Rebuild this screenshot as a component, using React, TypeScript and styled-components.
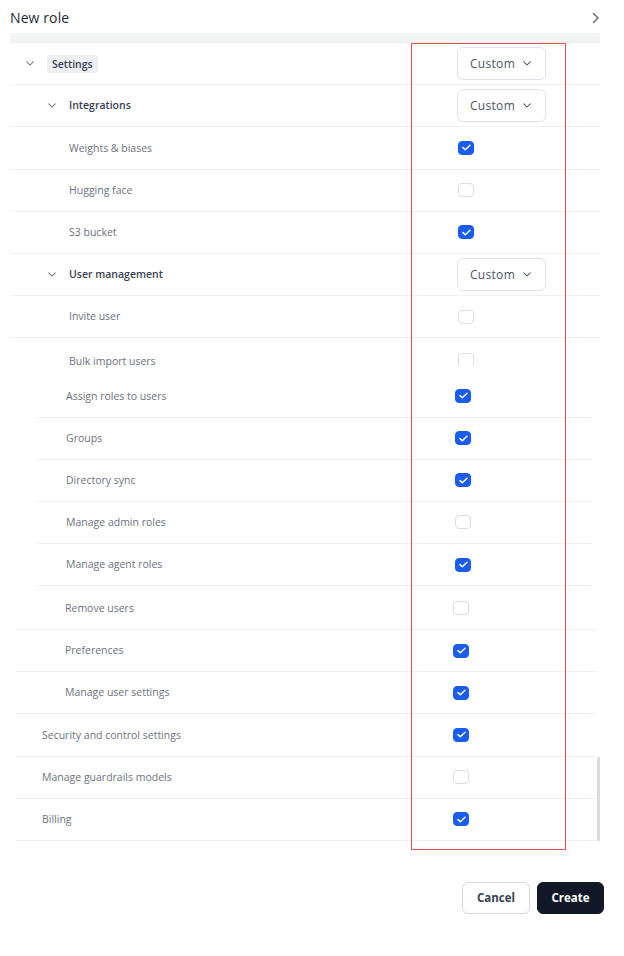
import React from "react";
import styled, { createGlobalStyle } from "styled-components";

const Global = createGlobalStyle`
  html, body { margin: 0; padding: 0; background: #ffffff; }
  body { font-family: "Open Sans", "Noto Sans", Arial, sans-serif; }
  * { box-sizing: border-box; }
`;

const Page = styled.div`
  position: relative;
  width: 624px;
  height: 956px;
  display: flex;
  flex-direction: column;
  overflow: hidden;
`;

const Header = styled.div`
  height: 33px;
  display: flex;
  align-items: center;
  justify-content: space-between;
  padding: 2px 24px 0 10px;
`;

const Title = styled.div`
  font-size: 14px;
  font-weight: 500;
  color: #1f2937;
  letter-spacing: 0.1px;
`;

const IconBtn = styled.span`
  display: flex;
  color: #6b7280;
`;

const Table = styled.div`
  margin-left: 10px;
  width: 590px;
  display: flex;
  flex-direction: column;
`;

const Band = styled.div`
  height: 10px;
  background: #f3f4f6;
  border-bottom: 1px solid #eceef2;
`;

const Block = styled.div<{ $left: number; $width: number }>`
  margin-left: ${(p) => p.$left}px;
  width: ${(p) => p.$width}px;
  display: flex;
  flex-direction: column;
`;

const BottomWrap = styled.div`
  display: flex;
  align-items: flex-end;
  margin-left: 6px;
  margin-top: 1.5px;
`;

const ScrollThumb = styled.div`
  width: 3px;
  height: 84px;
  background: #d9dbe0;
  border-radius: 1px;
`;

const Row = styled.div<{ $col: number; $pad: number; $open?: boolean }>`
  display: grid;
  grid-template-columns: ${(p) => p.$col}px auto;
  align-items: ${(p) => (p.$open ? "start" : "center")};
  height: ${(p) => (p.$open ? 37 : 42.2)}px;
  padding-top: ${(p) => (p.$open ? 15 : 0)}px;
  border-bottom: ${(p) => (p.$open ? "none" : "1px solid #eef0f3")};
  & > :first-child {
    padding-left: ${(p) => p.$pad}px;
  }
`;

const LabelCell = styled.div<{ $shift?: number }>`
  display: flex;
  align-items: center;
  min-width: 0;
  margin-top: ${(p) => p.$shift ?? 0}px;
`;

const Caret = styled.span<{ $w: number }>`
  display: flex;
  width: ${(p) => p.$w}px;
  color: #6b7280;
`;

const Label = styled.span<{ $bold?: boolean }>`
  font-size: 10.5px;
  font-weight: ${(p) => (p.$bold ? 600 : 400)};
  color: ${(p) => (p.$bold ? "#374151" : "#6b7280")};
  white-space: nowrap;
  line-height: 1.2;
`;

const Chip = styled.span`
  display: inline-flex;
  align-items: center;
  height: 18px;
  padding: 0 5px;
  border-radius: 3px;
  background: #eef0f4;
  font-size: 10.5px;
  font-weight: 600;
  color: #374151;
`;

const Select = styled.div`
  width: 89px;
  height: 33px;
  border: 1px solid #dfe2e8;
  border-radius: 6px;
  display: flex;
  align-items: center;
  justify-content: space-between;
  padding: 0 14px 0 12px;
  font-size: 12px;
  color: #4b5563;
  letter-spacing: 0.3px;
  background: #fff;
`;

const CutBox = styled.span`
  display: flex;
  height: 12px;
  overflow: hidden;
`;

const Box = styled.span<{ $on: boolean }>`
  flex: none;
  width: 16px;
  height: 14px;
  border-radius: 4px;
  display: flex;
  align-items: center;
  justify-content: center;
  background: ${(p) => (p.$on ? "#1a5cf2" : "#fff")};
  border: 1px solid ${(p) => (p.$on ? "#1a5cf2" : "#d9dde4")};
`;

const Footer = styled.div`
  margin-top: 41px;
  display: flex;
  justify-content: flex-end;
  gap: 7px;
  padding-right: 20px;
`;

const Button = styled.button<{ $primary?: boolean }>`
  height: 32px;
  padding: 0;
  width: ${(p) => (p.$primary ? 67 : 68)}px;
  border-radius: 6px;
  font-family: inherit;
  font-size: 11.5px;
  font-weight: 700;
  cursor: pointer;
  background: ${(p) => (p.$primary ? "#111827" : "#ffffff")};
  color: ${(p) => (p.$primary ? "#ffffff" : "#374151")};
  border: 1px solid ${(p) => (p.$primary ? "#111827" : "#d7dae0")};
`;

const Highlight = styled.div`
  position: absolute;
  left: 411px;
  top: 43px;
  width: 155px;
  height: 807px;
  box-shadow: inset 0 0 0 1px #ec4a52;
  pointer-events: none;
  z-index: 5;
`;

const ChevronDown = ({ size = 8 }: { size?: number }) => (
  <svg width={size} height={size * 0.6} viewBox="0 0 10 6" fill="none">
    <path d="M1 1l4 4 4-4" stroke="currentColor" strokeWidth="1.3" strokeLinecap="round" strokeLinejoin="round" />
  </svg>
);

const ChevronRight = () => (
  <svg width="8" height="12" viewBox="0 0 8 12" fill="none">
    <path d="M1.5 1.5L6 6l-4.5 4.5" stroke="currentColor" strokeWidth="1.6" strokeLinecap="round" strokeLinejoin="round" />
  </svg>
);

const Check = ({ on }: { on: boolean }) => (
  <Box $on={on}>
    {on && (
      <svg width="9" height="7" viewBox="0 0 9 7" fill="none">
        <path d="M1 3.6l2.3 2.2L8 1.2" stroke="#fff" strokeWidth="1.5" strokeLinecap="round" strokeLinejoin="round" />
      </svg>
    )}
  </Box>
);

type Item = { label: string; on: boolean; pad: number };

const middle: Item[] = [
  { label: "Assign roles to users", on: true, pad: 29 },
  { label: "Groups", on: true, pad: 29 },
  { label: "Directory sync", on: true, pad: 29 },
  { label: "Manage admin roles", on: false, pad: 29 },
  { label: "Manage agent roles", on: true, pad: 29 },
];

const bottom: Item[] = [
  { label: "Remove users", on: false, pad: 49 },
  { label: "Preferences", on: true, pad: 49 },
  { label: "Manage user settings", on: true, pad: 49 },
  { label: "Security and control settings", on: true, pad: 26 },
  { label: "Manage guardrails models", on: false, pad: 26 },
  { label: "Billing", on: true, pad: 26 },
];

const integrations: Item[] = [
  { label: "Weights & biases", on: true, pad: 59 },
  { label: "Hugging face", on: false, pad: 59 },
  { label: "S3 bucket", on: true, pad: 59 },
];

export default function App() {
  return (
    <Page>
      <Global />
      <Header>
        <Title>New role</Title>
        <IconBtn>
          <ChevronRight />
        </IconBtn>
      </Header>
      <Table>
        <Band />
        <Row $col={447} $pad={16}>
          <LabelCell>
            <Caret $w={21}>
              <ChevronDown />
            </Caret>
            <Chip>Settings</Chip>
          </LabelCell>
          <Select>
            <span>Custom</span>
            <ChevronDown />
          </Select>
        </Row>
        <Row $col={447} $pad={38}>
          <LabelCell>
            <Caret $w={21}>
              <ChevronDown />
            </Caret>
            <Label $bold>Integrations</Label>
          </LabelCell>
          <Select>
            <span>Custom</span>
            <ChevronDown />
          </Select>
        </Row>
        {integrations.map((it) => (
          <Row key={it.label} $col={448} $pad={it.pad}>
            <LabelCell>
              <Label>{it.label}</Label>
            </LabelCell>
            <Check on={it.on} />
          </Row>
        ))}
        <Row $col={447} $pad={38}>
          <LabelCell>
            <Caret $w={21}>
              <ChevronDown />
            </Caret>
            <Label $bold>User management</Label>
          </LabelCell>
          <Select>
            <span>Custom</span>
            <ChevronDown />
          </Select>
        </Row>
        <Row $col={448} $pad={59}>
          <LabelCell>
            <Label>Invite user</Label>
          </LabelCell>
          <Check on={false} />
        </Row>
        <Row $col={448} $pad={59} $open>
          <LabelCell $shift={2}>
            <Label>Bulk import users</Label>
          </LabelCell>
          <CutBox>
            <Check on={false} />
          </CutBox>
        </Row>
        <Block $left={27} $width={555}>
          {middle.map((it) => (
            <Row key={it.label} $col={418} $pad={it.pad}>
              <LabelCell>
                <Label>{it.label}</Label>
              </LabelCell>
              <Check on={it.on} />
            </Row>
          ))}
        </Block>
        <BottomWrap>
          <Block $left={0} $width={581}>
            {bottom.map((it) => (
              <Row key={it.label} $col={437} $pad={it.pad}>
                <LabelCell>
                  <Label>{it.label}</Label>
                </LabelCell>
                <Check on={it.on} />
              </Row>
            ))}
          </Block>
          <ScrollThumb />
        </BottomWrap>
      </Table>
      <Footer>
        <Button>Cancel</Button>
        <Button $primary>Create</Button>
      </Footer>
      <Highlight />
    </Page>
  );
}
